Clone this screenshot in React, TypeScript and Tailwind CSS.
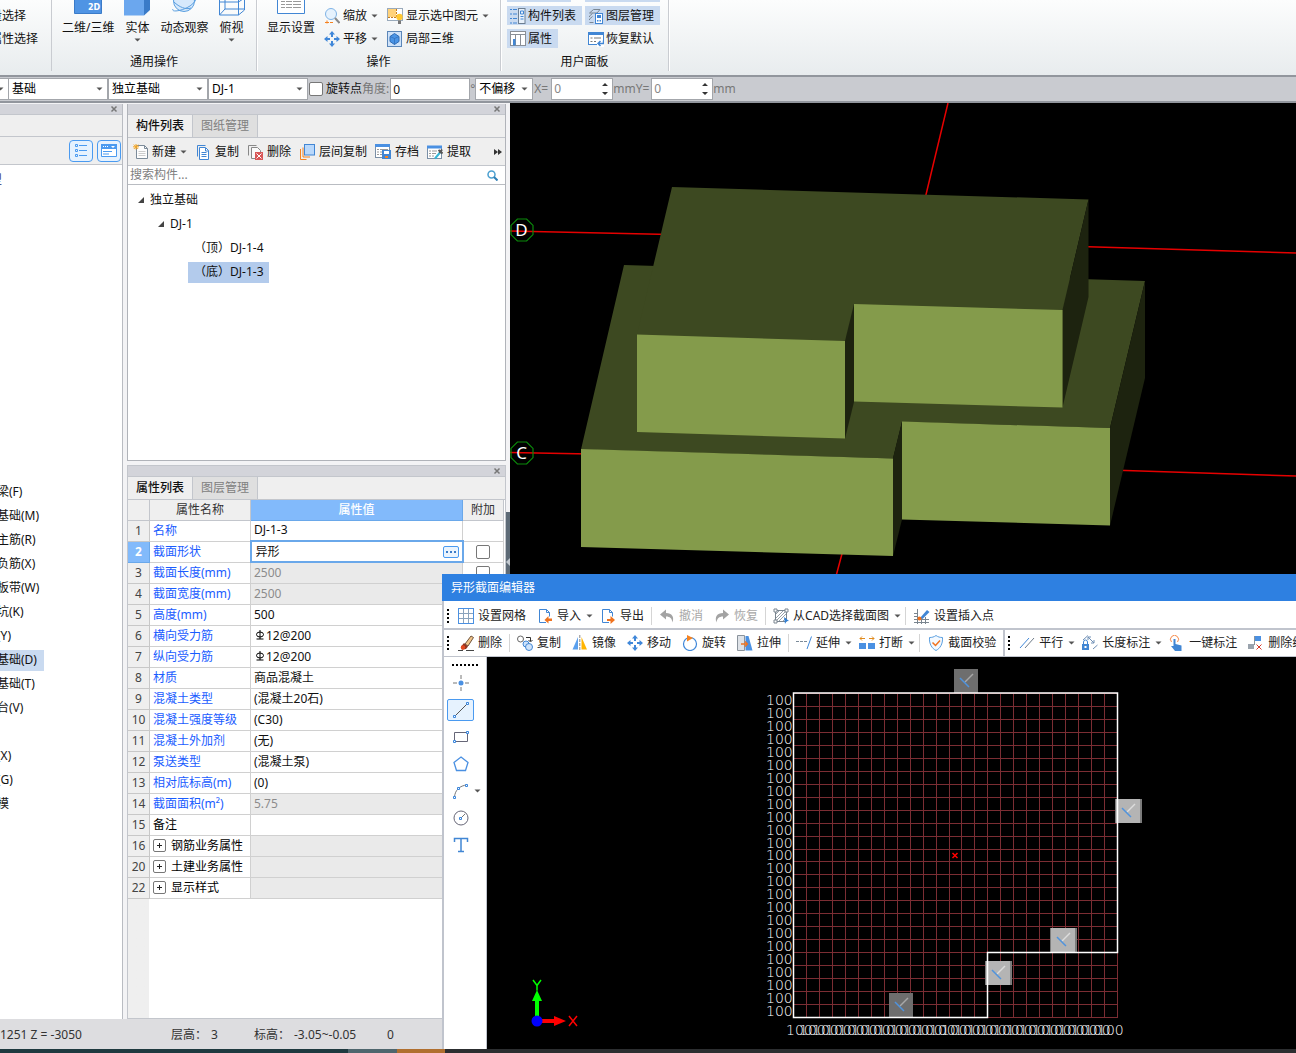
import React from "react";

type Kids = { children?: React.ReactNode };

/* ---------- small shared pieces ---------- */

const Icon = ({ children }: Kids) => (
  <svg viewBox="0 0 16 16" className="h-4 w-4 shrink-0" fill="none" aria-hidden="true">
    {children}
  </svg>
);

const Caret = () => (
  <svg viewBox="0 0 7 4" className="h-1 w-[7px] shrink-0" aria-hidden="true">
    <path d="M0.5 0.500h6L3.5 3.500z" fill="#555" />
  </svg>
);

const Close = () => (
  <button aria-label="关闭" className="flex h-full w-4 items-center justify-center">
    <svg viewBox="0 0 8 8" className="h-2 w-2" aria-hidden="true">
      <path d="M1.5 1.5l5 5M6.5 1.5l-5 5" stroke="#777" strokeWidth="1.5" />
    </svg>
  </button>
);

/* ---------- icons ---------- */

const ZoomIcon = () => (
  <Icon>
    <circle cx="7" cy="6" r="5.5" fill="#e6f2fd" stroke="#7fb3e6" />
    <path d="M11 10l4.5 5" stroke="#8a8a8a" strokeWidth="2" />
    <path d="M1 14.500h4M3 12.500v3M6 14.500h3" stroke="#f58220" />
  </Icon>
);

const MoveIcon = () => (
  <Icon>
    <path
      d="M8 0l3 3.5H9V6H7V3.500H5zM8 16l3-3.500H9V10H7v2.500H5zM0 8l3.500-3v2H6v2H3.500v2zM16 8l-3.500-3v2H10v2h2.500v2z"
      fill="#3f87d9"
    />
  </Icon>
);

const ShowSelectedIcon = () => (
  <Icon>
    <rect x="0.500" y="0.500" width="15" height="12" fill="#fff" stroke="#9ab" />
    <path d="M1 1h8v8H1z" fill="#ffd27a" />
    <path d="M9.500 1v9M1 9.500h8" stroke="#c67c1f" strokeDasharray="2 1" />
    <circle cx="12.500" cy="9" r="3.200" fill="#ffc832" />
    <path d="M11 12.500h3V16h-3z" fill="#777" />
  </Icon>
);

const Local3dIcon = () => (
  <Icon>
    <rect x="0.500" y="0.500" width="14" height="15" fill="#cfe3fa" stroke="#5b86b8" />
    <path d="M7.500 2.500L12 5.500v5l-4.500 3-4.500-3v-5z" fill="#4a94e6" stroke="#2f6cb5" />
    <path d="M3 5.500l4.500 2 4.500-2M7.500 7.500v6" stroke="#2f6cb5" strokeWidth="0.700" />
  </Icon>
);

const ListPanelIcon = () => (
  <Icon>
    <path d="M0 1.500h2M3 1.500h4M0 6h2M3 6h4M0 10.500h2M3 10.500h4M0 15h2M3 15h4" stroke="#4186d4" />
    <rect x="8.500" y="0.500" width="6.500" height="15" fill="#e8f1fb" stroke="#6d7f92" />
    <path d="M10.500 3h3v3h-3zM10.500 8.500h3M10.500 11h3" stroke="#4186d4" />
  </Icon>
);

const LayersIcon = () => (
  <Icon>
    <path d="M1.500 5l4-3.500H12L9 5zM1.500 9V8l3-2.500M1.500 12v-1l3-2.500M1.500 14.500h4" stroke="#7b8793" />
    <rect x="7.500" y="5.500" width="7" height="10" fill="#fff" stroke="#4186d4" />
    <path d="M9 7h4v3H9zM9 12h1.500v1.500H9zM11.500 12H13v1.500h-1.500z" fill="#4186d4" />
  </Icon>
);

const PropsIcon = () => (
  <Icon>
    <rect x="0.500" y="0.500" width="15" height="14" fill="#fff" stroke="#8a8f96" />
    <path d="M1 3.500h14M5.500 4v11M10.500 4v11" stroke="#8a8f96" />
    <path d="M3 8h2.500v6.500H3z" fill="#4186d4" />
  </Icon>
);

const RestoreIcon = () => (
  <Icon>
    <rect x="0.500" y="1.500" width="15" height="12" fill="#fff" stroke="#4186d4" />
    <path d="M0 1h16v3H0z" fill="#4186d4" />
    <path d="M2.500 7h2M6 7h7M2.500 10.500h2M6 10.500h2" stroke="#777" />
    <path d="M9 10h7v6H9z" fill="#fff" />
    <path d="M15.500 9.500v3H10M12.500 10L10 12.500l2.500 2.500" stroke="#4186d4" strokeWidth="1.500" />
  </Icon>
);

const NewIcon = () => (
  <Icon>
    <path d="M4.500 1.500h8l3 3v10h-11z" fill="#fdfdfd" stroke="#7c8b99" />
    <path d="M12.500 1.500v3h3" stroke="#7c8b99" />
    <path d="M6.500 7.500h7M6.500 9.500h7M6.500 11.500h7" stroke="#ccc" />
    <path d="M4 0v5.500M1 2.800h6M1.800 0.600l4.400 4.400M6.200 0.600L1.800 5" stroke="#f5a623" />
  </Icon>
);

const CopyIcon = () => (
  <Icon>
    <path d="M2.500 12.500v-11h8" stroke="#4186d4" />
    <path d="M4.500 3.500h6l3 3v9h-9z" fill="#fff" stroke="#4186d4" />
    <path d="M6.500 8.500h5M6.500 10.500h5M6.500 12.500h5M10.500 4v3h3" stroke="#4186d4" />
  </Icon>
);

const DeleteIcon = () => (
  <Icon>
    <path d="M1.500 11.500v-10h8" stroke="#888" />
    <path d="M4.500 3.500h6l3 3v8h-9z" fill="#fafafa" stroke="#888" />
    <path d="M8 8h8v8H8z" fill="#d95757" />
    <path d="M9.500 9.500l5 5M14.500 9.500l-5 5" stroke="#fff" />
  </Icon>
);

const LayerCopyIcon = () => (
  <Icon>
    <path d="M1.500 5v10.500h6M4 3.500V13h7" stroke="#f58220" />
    <rect x="5.500" y="0.500" width="10" height="10.500" fill="#b9d8fb" stroke="#4186d4" />
  </Icon>
);

const SaveIcon = () => (
  <Icon>
    <rect x="0.500" y="1.500" width="14" height="12" fill="#fff" stroke="#7a8fa6" />
    <path d="M0 0h15v3H0z" fill="#4a90e2" />
    <path d="M2 5.500h2M5 5.500h8M2 8h2M5 8h2M2 10.500h2M5 10.500h2" stroke="#999" />
    <path d="M7 6h9v9H7z" fill="#4186d4" />
    <path d="M9 7h5v3H9z" fill="#fff" />
    <path d="M10 12h3v2h-3z" fill="#f58220" />
  </Icon>
);

const ExtractIcon = () => (
  <Icon>
    <rect x="0.500" y="2.500" width="14" height="12" fill="#fff" stroke="#7a8fa6" />
    <path d="M0 1.500h15v3H0z" fill="#4a90e2" />
    <path d="M2 7h2M5 7h5M2 9.500h2M5 9.500h4M2 12h2M5 12h2" stroke="#999" />
    <path d="M8 14.500l5-6" stroke="#35b6d6" strokeWidth="2" />
    <path d="M11.500 6l4 3.500M12.500 9l2.500-3.500" stroke="#555" strokeWidth="2" />
  </Icon>
);

const GridIcon = () => (
  <Icon>
    <rect x="0.500" y="0.500" width="15" height="15" stroke="#4a90e2" />
    <path d="M5.500 1v14M10.500 1v14M1 5.500h14M1 10.500h14" stroke="#8aa3bd" />
  </Icon>
);

const DocArrow = ({ out }: { out?: boolean }) => (
  <Icon>
    <path d="M9 14.500H2.500v-13h7l3 3v4" fill="#fff" stroke="#4186d4" />
    <path d="M9.500 1.500v3h3" stroke="#4186d4" />
    {out ? (
      <path d="M7 11h3.500V8l4.500 4-4.500 4v-3H7z" fill="#f0731f" />
    ) : (
      <path d="M15 10.500V13h-3.500v2.500L7.500 12l4-4v2.500z" fill="#f0731f" />
    )}
  </Icon>
);

const UndoIcon = ({ flip }: { flip?: boolean }) => (
  <Icon>
    <g transform={flip ? "translate(16 0) scale(-1 1)" : undefined}>
      <path d="M1 6.500L7 1.500V5c6 0 8.500 4 6.500 9.500C13 10.500 11 8.500 7 8.500v3z" fill="#a3a3a3" />
    </g>
  </Icon>
);

const CadIcon = () => (
  <Icon>
    <path d="M2.500 2.500h11v11h-11z" stroke="#7a858f" />
    <path d="M3 6l3-3M3 10l7-7M3 13L13 3M6 13l7-7M10 13l3-3" stroke="#97a1aa" />
    <path d="M1 1h3v3H1zM12 1h3v3h-3zM1 12h3v3H1z" fill="#fff" stroke="#7a858f" />
    <path d="M11 9l5 4-2.500.3L12 16z" fill="#2f7fd6" />
  </Icon>
);

const InsertPointIcon = () => (
  <Icon>
    <path d="M3.500 1v15M0 11.500h15M7.500 9v7M11.500 9v7M0 5.500h3M0 8.500h3M0 14.500h15" stroke="#7a858f" />
    <path d="M6 10l7-8 2.500 2-7 7z" fill="#4186d4" />
    <circle cx="5.500" cy="10.500" r="2" fill="#f0731f" />
  </Icon>
);

const EraseIcon = () => (
  <Icon>
    <path d="M0 15.500h5M8 15.500h8" stroke="#444" />
    <path d="M7 9l6-8 2.500 1.500L10 11z" fill="#f1c58a" stroke="#6e533c" />
    <path d="M6 8l4 3.500L8 14l-4 .5-1-3z" fill="#8f3520" />
    <circle cx="5" cy="12.500" r="2.200" fill="#e2471e" />
  </Icon>
);

const DupIcon = () => (
  <Icon>
    <circle cx="3.500" cy="4" r="3" stroke="#666" />
    <path d="M9 2.500h4.500V6M11.500 5l2 2 2-2" stroke="#333" />
    <circle cx="9" cy="9" r="3" fill="#cfe3fa" stroke="#4186d4" />
    <circle cx="12" cy="12" r="3.500" fill="#cfe3fa" stroke="#4186d4" />
  </Icon>
);

const MirrorIcon = () => (
  <Icon>
    <path d="M6 2v12.500H0.500z" fill="#5aa0ee" />
    <path d="M9.500 2v12.500H15z" fill="#ffb400" />
    <path d="M7.800 0v16" stroke="#888" strokeDasharray="3 1" />
  </Icon>
);

const RotateIcon = () => (
  <Icon>
    <circle cx="8" cy="9" r="6.500" stroke="#3f87d9" strokeWidth="1.200" />
    <path d="M5 0l6 3-6 3.500z" fill="#f58220" />
  </Icon>
);

const StretchIcon = () => (
  <Icon>
    <path d="M0.500 0.500h7v15h-7z" fill="#dfe3e8" stroke="#8a939c" />
    <path d="M8.500 1h3l4 14.500h-7z" fill="#4a90e2" />
    <path d="M4 9h6M8 6.500L10.500 9 8 11.500" stroke="#f0731f" strokeWidth="1.300" />
  </Icon>
);

const ExtendIcon = () => (
  <Icon>
    <path d="M0 6.500h3M4 6.500h3M8 6.500h3" stroke="#7a8a99" />
    <path d="M15.500 1.500L11 14" stroke="#3f87d9" />
  </Icon>
);

const BreakIcon = () => (
  <Icon>
    <path d="M0 8h7v6H0zM9 8h7v6H9z" fill="#4a90e2" />
    <path d="M1 3.500h5M3 1.500l-2 2 2 2M10 3.500h5M13 1.500l2 2-2 2" stroke="#e08a1c" />
  </Icon>
);

const ShieldIcon = () => (
  <Icon>
    <path d="M8 0.500c2 1.500 4 2 6.500 2C15 9 12 13.500 8 15.500 4 13.500 1 9 1.500 2.500 4 2.500 6 2 8 .5z" stroke="#5a9fe0" fill="#f3f9ff" />
    <path d="M4.500 7.500l3 3 4.500-5" stroke="#f0731f" strokeWidth="1.500" />
  </Icon>
);

const ParallelIcon = () => (
  <Icon>
    <path d="M1 13L10 3" stroke="#3f87d9" />
    <path d="M6 13l9-10" stroke="#6f7c89" />
  </Icon>
);

const LengthIcon = () => (
  <Icon>
    <path d="M0 9h7v6H0z" fill="#4186d4" />
    <path d="M1.500 9V7a2 2 0 014 0v2" stroke="#4186d4" />
    <path d="M1 5l5-4.500M6 2l6 6M6 5V2h3M12 5v3H9M11 14l4.500-4" stroke="#6f8fb5" />
    <path d="M2.500 11h2v2h-2z" fill="#fff" />
  </Icon>
);

const TouchIcon = () => (
  <Icon>
    <path d="M2.500 7a4 4 0 116 0" stroke="#f58a4b" />
    <path d="M4.500 4h2v5l6 1.500V16H6l-4-5h2.500z" fill="#4186d4" />
  </Icon>
);

const RemoveLineIcon = () => (
  <Icon>
    <path d="M0 9h6v5H0z" fill="#9aa3ad" />
    <path d="M6.500 1v9" stroke="#8a939c" />
    <path d="M7 1h6v5H7z" fill="#4a90e2" />
    <path d="M8.500 9.500l5 5M13.500 9.500l-5 5" stroke="#d8392b" />
  </Icon>
);

/* ---------- ribbon ---------- */

const BigButton = ({ label, arrow, children }: Kids & { label: string; arrow?: boolean }) => (
  <button className="flex flex-col items-center px-1">
    <svg viewBox="0 0 28 16" className="-mx-[2px] h-4 w-7" fill="none" aria-hidden="true">
      {children}
    </svg>
    <span className="mt-1 h-4 leading-4 whitespace-nowrap">{label}</span>
    {arrow && (
      <span className="mt-[2px]">
        <Caret />
      </span>
    )}
  </button>
);

const RibbonGroup = ({ label, className, children }: Kids & { label: string; className: string }) => (
  <section className={`flex shrink-0 flex-col border-r border-[#c9ccd1] shadow-[1px_0_0_#fff] ${className}`}>
    <div className="flex h-[56px]">{children}</div>
    <h2 className="text-center leading-[18px]">{label}</h2>
  </section>
);

const RibbonButton = ({ label, icon, arrow }: { label: string; icon: React.ReactNode; arrow?: boolean }) => (
  <button className="flex h-[19px] items-center gap-[3px] whitespace-nowrap">
    {icon}
    {label}
    {arrow && (
      <span className="ml-px">
        <Caret />
      </span>
    )}
  </button>
);

const PanelToggle = ({ label, icon, on }: { label: string; icon: React.ReactNode; on?: boolean }) => (
  <button
    aria-pressed={!!on}
    className={`flex h-[19px] items-center gap-[2px] self-start pr-[6px] pl-[3px] whitespace-nowrap ${on ? "bg-[#c9daf0]" : ""}`}
  >
    {icon}
    {label}
  </button>
);

const Ribbon = () => (
  <header className="flex h-[75px] shrink-0 overflow-hidden bg-linear-to-b from-[#fcfdfd] to-[#e8ecee]">
    <div className="mb-1 flex w-[52px] shrink-0 flex-col gap-1 overflow-hidden border-r border-[#c9ccd1] pt-[6px]">
      <button className="-ml-[22px] h-[19px] self-start whitespace-nowrap">批量选择</button>
      <button className="-ml-[22px] h-[19px] self-start whitespace-nowrap">按属性选择</button>
    </div>
    <RibbonGroup label="通用操作" className="mb-1 w-[205px]">
      <div className="flex items-start gap-[3px] px-[6px]">
        <BigButton label="二维/三维">
          <path d="M0.500 -2h27v15.500h-27z" fill="#4f94e4" stroke="#3a7bc8" />
          <text x="14" y="10" fontSize="8" fontFamily="DejaVu Sans" fontWeight="bold" fill="#fff">
            2D
          </text>
        </BigButton>
        <BigButton label="实体" arrow>
          <path d="M1 -2h20v17.500H1z" fill="#6ba7ee" />
          <path d="M21 0l6-3v13l-6 5.500z" fill="#3a7bc8" />
        </BigButton>
        <BigButton label="动态观察">
          <circle cx="14" cy="1" r="10.500" fill="#d6e9fc" stroke="#5a9fe0" />
          <path d="M3 9c-3 5 20 0 23-10M4 2c5 5 12 8 17 6" stroke="#5a9fe0" />
        </BigButton>
        <BigButton label="俯视" arrow>
          <path d="M1.500 -2v17h19v-17M20.500 15l6-5v-12M7 -2v11h19M7 9l-5.500 6M1.500 2h19l6-4" stroke="#4186d4" />
        </BigButton>
      </div>
    </RibbonGroup>
    <RibbonGroup label="操作" className="mb-1 w-[244px]">
      <div className="flex items-start px-[6px]">
        <BigButton label="显示设置">
          <path d="M0.500 -2h27v15.500h-27z" fill="#fff" stroke="#4186d4" />
          <path d="M4 1.500h4M9 1.500h6M16 1.500h8M4 4.500h4M9 4.500h6M16 4.500h8M4 7.500h4M9 7.500h6M16 7.500h8" stroke="#999" />
        </BigButton>
        <div className="ml-[5px] flex w-[63px] flex-col gap-1 pt-[6px]">
          <RibbonButton label="缩放" icon={<ZoomIcon />} arrow />
          <RibbonButton label="平移" icon={<MoveIcon />} arrow />
        </div>
        <div className="flex flex-col gap-1 pt-[6px]">
          <RibbonButton label="显示选中图元" icon={<ShowSelectedIcon />} arrow />
          <RibbonButton label="局部三维" icon={<Local3dIcon />} />
        </div>
      </div>
    </RibbonGroup>
    <RibbonGroup label="用户面板" className="mb-1 w-[168px]">
      <div className="flex gap-[3px] pl-[6px]">
        {/* the row above is scrolled away, only its lower edge stays */}
        <div className="flex flex-col gap-1">
          <div className="h-[2px] w-16 bg-[#c9daf0]" />
          <PanelToggle label="构件列表" icon={<ListPanelIcon />} on />
          <PanelToggle label="属性" icon={<PropsIcon />} on />
        </div>
        <div className="flex flex-col gap-1">
          <div className="h-[2px] w-full bg-[#c9daf0]" />
          <PanelToggle label="图层管理" icon={<LayersIcon />} on />
          <PanelToggle label="恢复默认" icon={<RestoreIcon />} />
        </div>
      </div>
    </RibbonGroup>
  </header>
);

/* ---------- option bar ---------- */

const Combo = ({ label, value, className }: { label: string; value: string; className: string }) => (
  <div className={`relative shrink-0 ${className}`}>
    <select
      aria-label={label}
      className="h-[22px] w-full appearance-none border border-[#a3a6ab] bg-white pl-[3px] text-black"
    >
      <option>{value}</option>
    </select>
    <span className="pointer-events-none absolute inset-y-0 right-[5px] flex items-center">
      <Caret />
    </span>
  </div>
);

const Spin = ({ id }: { id: string }) => (
  <div className="flex h-[22px] w-[62px] shrink-0 items-center border border-[#a3a6ab] bg-white pr-1">
    <input id={id} defaultValue="0" disabled className="w-0 grow pl-[2px] text-[#888]" />
    <svg viewBox="0 0 6 14" className="h-[14px] w-[6px]" aria-hidden="true">
      <path d="M0 4l3-3 3 3zM0 10l3 3 3-3z" fill="#333" />
    </svg>
  </div>
);

const OptionBar = () => (
  <div className="flex h-[28px] shrink-0 items-center border-y-2 border-[#92969d] bg-[#c9cbd0]">
    <div className="flex h-[22px] w-2 shrink-0 items-center justify-end overflow-hidden border-y border-[#a3a6ab] bg-white pr-1">
      <Caret />
    </div>
    <Combo label="类别" value="基础" className="w-[100px]" />
    <Combo label="构件类型" value="独立基础" className="w-[100px]" />
    <Combo label="构件" value="DJ-1" className="w-[100px]" />
    <input
      id="rotate"
      type="checkbox"
      className="ml-px h-[14px] w-[14px] shrink-0 appearance-none rounded-xs border border-[#777] bg-white"
    />
    <label htmlFor="rotate" className="ml-[3px] whitespace-nowrap">旋转点</label>
    <label htmlFor="angle" className="pr-px whitespace-nowrap text-[#777]">角度:</label>
    <input id="angle" defaultValue="0" className="h-[22px] w-20 shrink-0 border border-[#a3a6ab] bg-white pl-[2px]" />
    <span className="w-[5px] shrink-0 text-[#777]">°</span>
    <Combo label="偏移方式" value="不偏移" className="w-[58px]" />
    <label htmlFor="dx" className="w-[18px] shrink-0 pl-px whitespace-nowrap text-[#777]">X=</label>
    <Spin id="dx" />
    <label htmlFor="dy" className="w-[38px] shrink-0 whitespace-nowrap text-[#777]">mmY=</label>
    <Spin id="dy" />
    <span className="text-[#777]">mm</span>
  </div>
);

/* ---------- left navigation ---------- */

const navItems = [
  "梁(F)", "基础(M)", "主筋(R)", "负筋(X)", "板带(W)", "坑(K)", "(Y)",
  "基础(D)", "基础(T)", "台(V)", "", "(X)", "(G)", "模",
];

const NavPanel = () => (
  <aside className="mt-px flex w-[123px] shrink-0 flex-col border-r border-[#b9bcc2] bg-white">
    <div className="flex h-[11px] shrink-0 justify-end border-b border-[#c3c6cc] bg-[#d3d4da]">
      <Close />
    </div>
    <div className="h-[22px] shrink-0 border-b border-[#c3c6cc] bg-[#efefef]" />
    <div className="flex h-[28px] shrink-0 items-center justify-end gap-1 border-b border-[#c3c6cc] bg-[#efefef] pr-px">
      <button aria-label="列表视图" className="flex h-[22px] w-6 items-center justify-center rounded-sm border border-[#4a9af0] bg-[#e6f2fe]">
        <Icon>
          <path d="M2.500 1.500h2v2h-2zM2.500 6.500h2v2h-2zM2.500 11.500h2v2h-2zM6 2.500h8M6 7.500h8M6 12.500h8" stroke="#4a9af0" />
        </Icon>
      </button>
      <button aria-label="图标视图" className="flex h-[22px] w-6 items-center justify-center rounded-sm border border-[#4a9af0] bg-[#e6f2fe]">
        <Icon>
          <path d="M0.500 1.500h15v12h-15z" fill="#fff" stroke="#4a9af0" />
          <path d="M0 1h16v5H0z" fill="#4a9af0" />
          <path d="M2 3h1v1H2zM4 3h1v1H4zM6 3h1v1H6zM10 3h4l-2 2z" fill="#fff" />
          <path d="M2 8.500h9M2 11h6" stroke="#4a9af0" />
        </Icon>
      </button>
    </div>
    <div className="-ml-[10px] flex h-[24px] items-center pt-[5px] text-[#2b2f6b]">型</div>
    <ul className="mt-[291px] overflow-hidden">
      {navItems.map((item, i) => (
        <li key={i} className="flex h-6 items-center">
          <span className={`flex h-[21px] items-center ${item === "基础(D)" ? "bg-[#c9daf0] pr-[7px]" : ""}`}>
            <span className="-ml-[3px] whitespace-nowrap">{item}</span>
          </span>
        </li>
      ))}
    </ul>
  </aside>
);

/* ---------- component list ---------- */

const Tabs = ({ active, other }: { active: string; other: string }) => (
  <div role="tablist" className="flex h-[23px] shrink-0 border-b border-[#c3c6cc] bg-[#efefef]">
    <button role="tab" aria-selected="true" className="w-[65px] border-r border-[#c3c6cc] font-medium">
      {active}
    </button>
    <button role="tab" aria-selected="false" className="w-[65px] border-r border-[#c3c6cc] bg-[#dfdfdf] text-[#808080]">
      {other}
    </button>
  </div>
);

const ListButton = ({ label, icon, arrow }: { label: string; icon: React.ReactNode; arrow?: boolean }) => (
  <button className="flex items-center gap-1 whitespace-nowrap">
    {icon}
    {label}
    {arrow && <Caret />}
  </button>
);

const TreeArrow = () => (
  <svg viewBox="0 0 6 6" className="h-[6px] w-[6px]" aria-hidden="true">
    <path d="M6 0v6H0z" fill="#444" />
  </svg>
);

const ComponentPanel = () => (
  <section className="flex h-[357px] shrink-0 flex-col border border-t-0 border-[#b0b3b9] bg-white">
    <div className="flex h-[11px] shrink-0 justify-end border-b border-[#c3c6cc] bg-[#d3d4da]">
      <Close />
    </div>
    <Tabs active="构件列表" other="图纸管理" />
    <div className="flex h-[28px] shrink-0 items-center gap-2 border-b border-[#c3c6cc] bg-[#efefef] pt-px pr-[3px] pl-1">
      <ListButton label="新建" icon={<NewIcon />} arrow />
      <ListButton label="复制" icon={<CopyIcon />} />
      <ListButton label="删除" icon={<DeleteIcon />} />
      <ListButton label="层间复制" icon={<LayerCopyIcon />} />
      <ListButton label="存档" icon={<SaveIcon />} />
      <ListButton label="提取" icon={<ExtractIcon />} />
      <button aria-label="更多" className="ml-auto">
        <svg viewBox="0 0 8 6" className="h-[6px] w-2" aria-hidden="true">
          <path d="M0 0l4 3-4 3zM4 0l4 3-4 3z" fill="#333" />
        </svg>
      </button>
    </div>
    <div className="flex h-[19px] shrink-0 items-center border-b border-[#b9bcc2] pr-[7px]">
      <input aria-label="搜索构件" placeholder="搜索构件..." className="w-0 grow pl-[2px] placeholder:text-[#808080]" />
      <svg viewBox="0 0 11 11" className="h-[11px] w-[11px]" fill="none" aria-hidden="true">
        <circle cx="4.500" cy="4.500" r="3.500" stroke="#4a9fd0" strokeWidth="1.500" />
        <path d="M7 7l3.500 3.500" stroke="#2f7fb5" strokeWidth="2" />
      </svg>
    </div>
    <ul className="pt-[3px] whitespace-nowrap">
      <li className="flex h-6 items-center gap-[6px] pl-[10px]">
        <TreeArrow />
        独立基础
      </li>
      <li className="flex h-6 items-center gap-[6px] pl-[30px]">
        <TreeArrow />
        DJ-1
      </li>
      <li className="flex h-6 items-center pl-[66px]">（顶）DJ-1-4</li>
      <li className="flex h-6 items-center pl-[60px]">
        <span className="h-[21px] bg-[#b3cbec] pr-[5px] pl-[6px] leading-[20px]">（底）DJ-1-3</span>
      </li>
    </ul>
  </section>
);

/* ---------- property table ---------- */

type Row = { no: number; name: string; value: string; kind?: "locked" | "group" | "plain" | "bar" | "edit" };

const rows: Row[] = [
  { no: 1, name: "名称", value: "DJ-1-3" },
  { no: 2, name: "截面形状", value: "异形", kind: "edit" },
  { no: 3, name: "截面长度(mm)", value: "2500", kind: "locked" },
  { no: 4, name: "截面宽度(mm)", value: "2500", kind: "locked" },
  { no: 5, name: "高度(mm)", value: "500" },
  { no: 6, name: "横向受力筋", value: "12@200", kind: "bar" },
  { no: 7, name: "纵向受力筋", value: "12@200", kind: "bar" },
  { no: 8, name: "材质", value: "商品混凝土" },
  { no: 9, name: "混凝土类型", value: "(混凝土20石)" },
  { no: 10, name: "混凝土强度等级", value: "(C30)" },
  { no: 11, name: "混凝土外加剂", value: "(无)" },
  { no: 12, name: "泵送类型", value: "(混凝土泵)" },
  { no: 13, name: "相对底标高(m)", value: "(0)" },
  { no: 14, name: "截面面积(m²)", value: "5.75", kind: "locked" },
  { no: 15, name: "备注", value: "", kind: "plain" },
  { no: 16, name: "钢筋业务属性", value: "", kind: "group" },
  { no: 20, name: "土建业务属性", value: "", kind: "group" },
  { no: 22, name: "显示样式", value: "", kind: "group" },
];

const RebarSign = () => (
  <svg viewBox="0 0 12 12" className="h-3 w-3" fill="none" aria-hidden="true">
    <ellipse cx="6" cy="4.500" rx="3.500" ry="2.500" stroke="#000" />
    <path d="M6 0v9M2.500 9h7" stroke="#000" />
  </svg>
);

const ValueCell = ({ row }: { row: Row }) => {
  if (row.kind === "edit") {
    return (
      <td className="border-2 border-[#6aa8ea] bg-white p-0">
        <div className="flex h-[18px] items-center pr-[3px]">
          <input aria-label={row.name} defaultValue={row.value} className="w-0 grow pl-1" />
          <button aria-label="选择截面" className="flex h-3 w-4 items-center justify-center rounded-xs border border-[#4a9af0] bg-[#eaf4fe]">
            <svg viewBox="0 0 10 2" className="h-[2px] w-[10px]" aria-hidden="true">
              <path d="M0 0h2v2H0zM4 0h2v2H4zM8 0h2v2H8z" fill="#3a7bc8" />
            </svg>
          </button>
        </div>
      </td>
    );
  }
  const shade = row.kind === "locked" || row.kind === "group" ? "bg-[#eaeaea] text-[#8c8c8c]" : "bg-white";
  return (
    <td className={`border border-[#d0d0d0] p-0 pl-[3px] ${shade}`}>
      <span className="flex items-center">
        {row.kind === "bar" && <RebarSign />}
        {row.value}
      </span>
    </td>
  );
};

const PropertyPanel = () => (
  <section className="flex min-h-0 flex-1 flex-col overflow-hidden border border-[#c3c6cc] bg-white">
    <div className="flex h-[11px] shrink-0 justify-end border-b border-[#c3c6cc] bg-[#d3d4da]">
      <Close />
    </div>
    <Tabs active="属性列表" other="图层管理" />
    <div className="flex-1 bg-linear-to-r from-[#efefef] from-[21px] to-white to-[21px]">
      <table className="-ml-px table-fixed border-collapse">
        <colgroup>
          <col className="w-[22px]" />
          <col className="w-[101px]" />
          <col className="w-[212px]" />
          <col className="w-[41px]" />
        </colgroup>
        <thead>
          <tr className="h-[20px] bg-[#efefef]">
            <th aria-label="序号" className="border border-t-0 border-[#c3c6cc]" />
            <th className="border border-t-0 border-[#c3c6cc] p-0 font-normal text-[#333]">属性名称</th>
            <th className="border border-t-0 border-[#6aa8ea] bg-[#82bafb] p-0 font-medium text-white">属性值</th>
            <th className="border border-t-0 border-[#c3c6cc] p-0 font-normal text-[#333]">附加</th>
          </tr>
        </thead>
        <tbody>
          {rows.map((row) => (
            <tr key={row.no} className="h-[21px]">
              <th
                className={`border p-0 ${
                  row.kind === "edit"
                    ? "border-[#6aa8ea] bg-[#82bafb] font-bold text-white"
                    : "border-[#c8c8c8] bg-[#efefef] font-normal text-[#444]"
                }`}
              >
                {row.no}
              </th>
              <td
                className={`border border-[#d0d0d0] p-0 whitespace-nowrap ${
                  row.kind === "group" || row.kind === "plain" ? "text-black" : "text-[#1a5cff]"
                }`}
              >
                <span className="flex items-center pl-[3px]">
                  {row.kind === "group" && (
                    <button
                      aria-label={"展开" + row.name}
                      className="mr-[5px] flex h-[13px] w-[13px] items-center justify-center rounded-xs border border-[#777]"
                    >
                      <svg viewBox="0 0 5 5" className="h-[5px] w-[5px]" aria-hidden="true">
                        <path d="M2.500 0v5M0 2.500h5" stroke="#222" />
                      </svg>
                    </button>
                  )}
                  {row.name}
                </span>
              </td>
              <ValueCell row={row} />
              <td className="border border-[#d0d0d0] bg-white p-0">
                {row.no > 1 && row.kind !== "group" && (
                  <input
                    type="checkbox"
                    aria-label={"附加" + row.name}
                    className="mx-auto block h-[14px] w-[14px] appearance-none rounded-xs border border-[#777] bg-white"
                  />
                )}
              </td>
            </tr>
          ))}
        </tbody>
      </table>
    </div>
  </section>
);

/* ---------- 3D view ---------- */

const AxisBubble = ({ y, label }: { y: number; label: string }) => (
  <g>
    <path
      d="M-4.600-11h9.200L11-4.600v9.200L4.600 11h-9.200L-11 4.600v-9.200z"
      transform={`translate(522 ${y})`}
      fill="none"
      stroke="#0b8a0b"
      strokeWidth="1.200"
    />
    <text x="521.500" y={y + 6} textAnchor="middle" fontSize="17" fontFamily="Noto Sans" fill="#fff">
      {label}
    </text>
  </g>
);

const ModelView = () => (
  <div className="min-w-0 flex-1 bg-black">
    <svg viewBox="510 103 786 916" preserveAspectRatio="xMinYMin slice" className="h-full w-full" role="img" aria-label="三维模型">
      <g stroke="#e60000" strokeWidth="1.500">
        <path d="M510 231l160 3.500M1080 246.500l216 6.500" />
        <path d="M510 452.500l80 1.500M1110 470l186 6" />
        <path d="M948 103l-24 100M843 550l-8 30" />
      </g>
      <path d="M624 265L1145 281 1110 428 902 422 893 458.500 581 449.500z" fill="#3d4921" />
      <path d="M1145 281v97l-35 147.500V428z" fill="#1d230f" />
      <path d="M902 421.500v98l-9 36.500v-98z" fill="#1d230f" />
      <path d="M581 449l312 9.500V556l-312-9z" fill="#849b4b" />
      <path d="M902 421.500l208 6.500v97.500l-208-6z" fill="#849b4b" />
      <path d="M672 187l416.500 12.500-26 110.500L854 304l-9 37-208-6.500z" fill="#3d4921" />
      <path d="M1088.500 199.500V297l-26 110.500V310z" fill="#1d230f" />
      <path d="M854 304v98l-9 36.500V341z" fill="#1d230f" />
      <path d="M637 334.500l208 6.500v97.500L637 432z" fill="#849b4b" />
      <path d="M854 304l208.500 6v97.500L854 401.500z" fill="#849b4b" />
      <AxisBubble y={230} label="D" />
      <AxisBubble y={453} label="C" />
    </svg>
  </div>
);

/* ---------- section editor ---------- */

const ToolButton = ({ label, icon, arrow, off }: { label: string; icon: React.ReactNode; arrow?: boolean; off?: boolean }) => (
  <div className="flex shrink-0 items-center">
    <button
      disabled={off}
      className={`flex h-[22px] items-center gap-1 rounded-sm px-1 whitespace-nowrap ${off ? "text-[#a8a8a8]" : "text-[#222]"}`}
    >
      {icon}
      {label}
    </button>
    {arrow && (
      <button aria-label={label + "选项"} className="flex h-[22px] w-2 items-center justify-end">
        <Caret />
      </button>
    )}
  </div>
);

const Grip = () => (
  <svg viewBox="0 0 2 14" className="mr-[2px] h-[14px] w-[2px] shrink-0" aria-hidden="true">
    <path d="M0 0h2v2H0zM0 4h2v2H0zM0 8h2v2H0zM0 12h2v2H0z" fill="#000" />
  </svg>
);

const Divider = ({ wide }: { wide?: boolean }) => (
  <div className={`h-[18px] w-px shrink-0 bg-[#d5d5d5] ${wide ? "mx-px" : ""}`} />
);

const DrawTool = ({ label, on, children }: Kids & { label: string; on?: boolean }) => (
  <button
    aria-label={label}
    aria-pressed={!!on}
    className={`flex h-[22px] w-[27px] items-center justify-center rounded-xs border ${
      on ? "border-[#4a9af0] bg-[#e6f2fe]" : "border-transparent"
    }`}
  >
    <Icon>{children}</Icon>
  </button>
);

const Marker = ({ x, y, dim }: { x: number; y: number; dim?: boolean }) => (
  <g transform={`translate(${x} ${y})`}>
    {!dim && <rect x="-1" width="27" height="24" fill="#7c7c7c" />}
    <rect width="24" height="24" fill={dim ? "#6e6e6e" : "#b4b4b4"} />
    <path d="M11 13l8-8" stroke={dim ? "#a8a8a8" : "#dcdcdc"} strokeWidth="1.500" />
    <path d="M6 9l9 9" stroke="#4f93dd" strokeWidth="1.500" />
  </g>
);

const CELLS = 25;
const STEP = 324 / CELLS;
const ticks = Array.from({ length: CELLS + 1 }, (_, i) => Math.round(i * STEP));

const SectionCanvas = () => (
  <svg
    viewBox="487 657 809 392"
    preserveAspectRatio="xMinYMin slice"
    className="h-full w-0 grow bg-black"
    role="img"
    aria-label="截面网格"
  >
    <g stroke="#7b2d33">
      {ticks.map((t) => (
        <path key={t} d={`M${793.5 + t} 693v325M793 ${693.5 + t}h325`} />
      ))}
    </g>
    <g fill="#fff" fontSize="14" fontFamily="'DejaVu Sans Light', 'DejaVu Sans', sans-serif">
      {ticks.slice(1).map((t) => (
        <text key={"v" + t} x="766" y={692 + t}>
          100
        </text>
      ))}
      {ticks.slice(1).map((t) => (
        <text key={"h" + t} x={773 + t} y="1035">
          100
        </text>
      ))}
    </g>
    <Marker x={954} y={669} dim />
    <Marker x={1116} y={799} />
    <Marker x={1051} y={928} />
    <Marker x={986} y={961} />
    <Marker x={889} y={993} dim />
    <path d="M793.500 693v324.500h194V952.500h130V693z" fill="none" stroke="#fff" strokeWidth="1.500" />
    <path d="M952.500 853l5 5M957.500 853l-5 5" stroke="#f00" strokeWidth="1.500" />
    <g>
      <path d="M535 1021v-20h-3l5-11 5 11h-3v20z" fill="#0f0" />
      <path d="M537 1019h17v-3l12 5-12 5v-3h-17z" fill="#f00" />
      <circle cx="537" cy="1021" r="5.500" fill="#00f" />
      <path d="M533 980l4 5.500 4-5.500M537 985.500v5" stroke="#0f0" strokeWidth="1.500" fill="none" />
      <path d="M569 1016l8 10M577 1016l-8 10" stroke="#f00" strokeWidth="1.500" />
    </g>
  </svg>
);

const SectionEditor = () => (
  <div
    role="dialog"
    aria-label="异形截面编辑器"
    className="absolute top-[574px] right-0 bottom-1 left-[442px] flex flex-col overflow-hidden bg-white"
  >
    <h2 className="h-[27px] shrink-0 bg-[#2e80e1] pl-[9px] leading-[27px] text-white">异形截面编辑器</h2>
    <div className="flex min-h-0 flex-1 flex-col border-l-2 border-[#c0c4cd]">
      <div className="flex h-[29px] shrink-0 items-center gap-[3px] border-b-2 border-[#c0c4cd] pt-[2px] pl-[3px]">
        <Grip />
        <ToolButton label="设置网格" icon={<GridIcon />} />
        <ToolButton label="导入" icon={<DocArrow />} arrow />
        <ToolButton label="导出" icon={<DocArrow out />} />
        <Divider />
        <ToolButton label="撤消" icon={<UndoIcon />} off />
        <ToolButton label="恢复" icon={<UndoIcon flip />} off />
        <Divider />
        <ToolButton label="从CAD选择截面图" icon={<CadIcon />} arrow />
        <Divider wide />
        <ToolButton label="设置插入点" icon={<InsertPointIcon />} />
      </div>
      <div className="flex h-[27px] shrink-0 items-center gap-[3px] border-b border-[#c0c4cd] pl-[3px]">
        <Grip />
        <ToolButton label="删除" icon={<EraseIcon />} />
        <Divider />
        <ToolButton label="复制" icon={<DupIcon />} />
        <ToolButton label="镜像" icon={<MirrorIcon />} />
        <ToolButton label="移动" icon={<MoveIcon />} />
        <ToolButton label="旋转" icon={<RotateIcon />} />
        <ToolButton label="拉伸" icon={<StretchIcon />} />
        <Divider />
        <ToolButton label="延伸" icon={<ExtendIcon />} arrow />
        <ToolButton label="打断" icon={<BreakIcon />} arrow />
        <Divider wide />
        <ToolButton label="截面校验" icon={<ShieldIcon />} />
        <div className="h-full w-[2px] shrink-0 bg-[#c0c4cd]" />
        <Grip />
        <ToolButton label="平行" icon={<ParallelIcon />} arrow />
        <ToolButton label="长度标注" icon={<LengthIcon />} arrow />
        <ToolButton label="一键标注" icon={<TouchIcon />} />
        <ToolButton label="删除线标注" icon={<RemoveLineIcon />} />
      </div>
      <div className="flex min-h-0 flex-1">
        <div className="flex w-[43px] shrink-0 flex-col gap-[5px] border-r border-[#c0c4cd] pt-[7px] pl-[3px]">
          <svg viewBox="0 0 26 2" className="mb-px ml-[5px] h-[2px] w-[26px] shrink-0" aria-hidden="true">
            <path d="M0 1h26" stroke="#000" strokeWidth="2" strokeDasharray="2 2" />
          </svg>
          <DrawTool label="点">
            <path d="M8 0v4M8 12v4M0 8h4M12 8h4" stroke="#777" />
            <circle cx="8" cy="8" r="2.500" fill="#4a90e2" />
          </DrawTool>
          <DrawTool label="直线" on>
            <path d="M2 14L14 2" stroke="#555" />
            <path d="M0.500 13.500h2v2h-2zM13.500 0.500h2v2h-2z" fill="#fff" stroke="#3a86dd" />
          </DrawTool>
          <DrawTool label="矩形">
            <path d="M1.500 3.500h13v9h-13z" stroke="#667" />
            <path d="M0.500 11.500h2v2h-2zM13.500 2.500h2v2h-2z" fill="#fff" stroke="#3a86dd" />
          </DrawTool>
          <DrawTool label="多边形">
            <path d="M8 1l7 5.500-2.500 8h-9L1 6.500z" stroke="#4a90e2" strokeWidth="1.300" />
          </DrawTool>
          <div className="flex items-center">
            <DrawTool label="弧线">
              <path d="M1.500 14C2 7 7 2.500 14 2" stroke="#777" />
              <path d="M0.500 13.500h2v2h-2zM4.500 4.500h2v2h-2zM12.500 1.500h2v2h-2z" fill="#fff" stroke="#3a86dd" />
            </DrawTool>
            <Caret />
          </div>
          <DrawTool label="圆">
            <circle cx="8" cy="8" r="7" stroke="#667" />
            <path d="M8 8l4-4" stroke="#777" />
            <path d="M6.500 7.500h2v2h-2z" fill="#fff" stroke="#3a86dd" />
          </DrawTool>
          <DrawTool label="文字">
            <path d="M1.500 5V1.500h13V5M8 1.500v13M5 14.500h6" stroke="#4186d4" strokeWidth="1.500" />
          </DrawTool>
        </div>
        <SectionCanvas />
      </div>
    </div>
  </div>
);

/* ---------- page ---------- */

const App = () => (
  <div className="relative flex h-screen flex-col overflow-hidden bg-[#f3f3f5] font-['Noto_Sans','Noto_Sans_CJK_SC',sans-serif] text-xs text-[#111]">
    <Ribbon />
    <OptionBar />
    <main className="flex min-h-0 flex-1 overflow-hidden">
      <NavPanel />
      <div className="mt-px ml-1 flex w-[379px] shrink-0 flex-col gap-1">
        <ComponentPanel />
        <PropertyPanel />
      </div>
      <div className="flex w-1 shrink-0 flex-col">
        <div className="h-[409px]" />
        <div className="flex-1 bg-[#5d6a76] pt-[46px]">
          <svg viewBox="0 0 4 8" className="h-2 w-1" aria-hidden="true">
            <path d="M4 0v8L0 4z" fill="#c3c9d0" />
          </svg>
        </div>
      </div>
      <ModelView />
    </main>
    <footer className="flex h-[30px] shrink-0 items-center bg-[#dddde0] pt-px whitespace-nowrap text-[#333]">
      <span className="w-[171px]">1251 Z = -3050</span>
      <span className="w-10">层高：</span>
      <span className="w-[43px]">3</span>
      <span className="w-10">标高：</span>
      <span className="w-[93px]">-3.05~-0.05</span>
      <span>0</span>
    </footer>
    <div className="flex h-1 shrink-0 bg-[#1f3a40]">
      <div className="ml-[348px] w-[49px] bg-[#4f666e]" />
      <div className="w-12 bg-[#b06f2f]" />
      <div className="flex-1 bg-[#2c2e30]" />
    </div>
    <SectionEditor />
  </div>
);

export default App;
